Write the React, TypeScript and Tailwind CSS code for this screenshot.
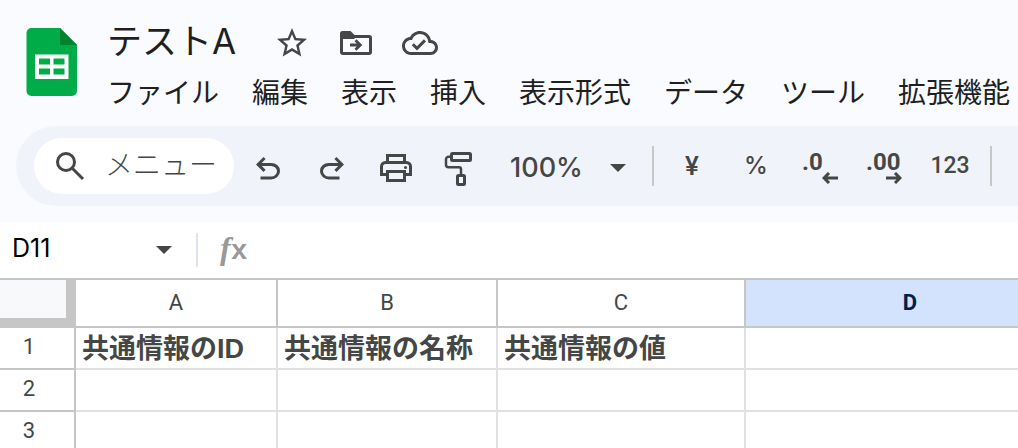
import React from 'react';

const menus = ['ファイル', '編集', '表示', '挿入', '表示形式', 'データ', 'ツール', '拡張機能'];

const columns = [
  { name: 'A', selected: false },
  { name: 'B', selected: false },
  { name: 'C', selected: false },
  { name: 'D', selected: true },
];

const rows = [
  ['共通情報のID', '共通情報の名称', '共通情報の値', ''],
  ['', '', '', ''],
  ['', '', '', ''],
];

const SheetsLogo = () => (
  <svg width="52" height="70" viewBox="0 0 52 70" aria-hidden="true">
    <path d="M5 1h29l17 17v46a5 5 0 0 1-5 5H5.500a5 5 0 0 1-5-5V6a5 5 0 0 1 5-5z" fill="#00ac47" />
    <path d="M34 1l17 17H34z" fill="#00832d" />
    <path
      d="M9 27.500h33.500v24.500H9zM13 31.500v6h11v-6zM27.500 31.500v6h11v-6zM13 41.500v6h11v-6zM27.500 41.500v6h11v-6z"
      fill="#fff"
      fillRule="evenodd"
    />
  </svg>
);

const StarIcon = () => (
  <svg width="36" height="36" viewBox="0 0 24 24" fill="currentColor" aria-hidden="true">
    <path d="M22 9.240l-7.190-.62L12 2 9.190 8.630 2 9.240l5.460 4.730L5.820 21 12 17.270 18.180 21l-1.630-7.030L22 9.240zM12 15.400l-3.760 2.270 1-4.280-3.320-2.880 4.380-.38L12 6.100l1.710 4.040 4.380.38-3.320 2.880 1 4.280L12 15.400z" />
  </svg>
);

const MoveIcon = () => (
  <svg width="36" height="36" viewBox="0 0 36 36" aria-hidden="true">
    <path d="M2 14V8.500A2.500 2.500 0 0 1 4.500 6h8l4 4v4z" fill="currentColor" />
    <rect x="3.500" y="11.500" width="29" height="17" rx="1.500" fill="none" stroke="currentColor" strokeWidth="3" />
    <path d="M12 20h10M17.500 15.200l4.800 4.800-4.800 4.800" fill="none" stroke="currentColor" strokeWidth="2.800" />
  </svg>
);

const CloudDoneIcon = () => (
  <svg width="36" height="36" viewBox="0 0 24 24" fill="currentColor" aria-hidden="true">
    <path d="M19.350 10.040C18.670 6.590 15.640 4 12 4 9.110 4 6.600 5.640 5.350 8.040 2.340 8.360 0 10.910 0 14c0 3.310 2.690 6 6 6h13c2.760 0 5-2.240 5-5 0-2.640-2.050-4.780-4.650-4.960zM19 18H6c-2.210 0-4-1.790-4-4 0-2.050 1.530-3.760 3.560-3.970l1.070-.11.5-.95C8.080 7.140 9.940 6 12 6c2.620 0 4.880 1.860 5.390 4.430l.3 1.500 1.530.11c1.560.1 2.780 1.410 2.780 2.960 0 1.650-1.350 3-3 3zm-9-3.820l-2.090-2.090L6.500 13.500 10 17l6.010-6.010-1.410-1.410z" />
  </svg>
);

const SearchIcon = () => (
  <svg width="36" height="36" viewBox="0 0 36 36" fill="none" stroke="currentColor" strokeWidth="3" aria-hidden="true">
    <circle cx="14" cy="14" r="8.500" />
    <path d="M20 20l11 11" />
  </svg>
);

const UndoIcon = ({ className }: { className?: string }) => (
  <svg width="36" height="36" viewBox="0 -985 960 960" fill="currentColor" className={className} aria-hidden="true">
    <path d="M280-200v-80h284q63 0 109.500-40T720-420q0-60-46.500-100T564-560H312l104 104-56 56-200-200 200-200 56 56-104 104h252q97 0 169.500 63T800-420q0 94-72.500 157T564-200H280Z" />
  </svg>
);

const PrintIcon = () => (
  <svg width="36" height="36" viewBox="0 0 36 36" fill="none" stroke="currentColor" strokeWidth="3" aria-hidden="true">
    <path d="M9.500 12V5.500h17V12" />
    <path d="M9.500 24.500h-6v-8a4 4 0 0 1 4-4h21a4 4 0 0 1 4 4v8h-6" />
    <rect x="9.500" y="21.500" width="17" height="9" />
    <circle cx="27.500" cy="17.500" r="1.500" fill="currentColor" stroke="none" />
  </svg>
);

const PaintIcon = () => (
  <svg width="36" height="36" viewBox="0 0 36 36" fill="none" stroke="currentColor" aria-hidden="true">
    <rect x="9.500" y="3.500" width="19" height="7" rx="1" strokeWidth="3" />
    <path d="M8.500 6.800H6.500a2.500 2.500 0 0 0-2.500 2.500v5.500A2.500 2.500 0 0 0 6.500 17.300H17a2 2 0 0 1 2 2V24" strokeWidth="2.500" />
    <rect x="15.500" y="25.500" width="7" height="9" rx="1" strokeWidth="3" />
  </svg>
);

const Caret = () => (
  <svg width="16" height="8" viewBox="0 0 16 8" fill="currentColor" aria-hidden="true">
    <path d="M0 0h16L8 8z" />
  </svg>
);

const Arrow = ({ className }: { className?: string }) => (
  <svg width="16" height="12" viewBox="0 0 16 12" fill="none" stroke="currentColor" strokeWidth="3" className={className} aria-hidden="true">
    <path d="M16 6H2M7 1L2 6l5 5" />
  </svg>
);

const toolButton = 'flex h-14 w-16 shrink-0 items-center justify-center';

const App: React.FC = () => {
  return (
    <div className="flex h-screen flex-col overflow-hidden bg-white font-['Roboto','Noto_Sans_CJK_JP',sans-serif] text-[#444746]">
      <header className="shrink-0 bg-[#f9fbff] pt-[25px] pb-4">
        <div className="flex">
          <a href="#" aria-label="スプレッドシート ホーム" className="mt-0.5 ml-[26px] shrink-0">
            <SheetsLogo />
          </a>
          <div className="ml-[29px] min-w-0">
            <div className="flex h-9 items-center gap-7">
              <h1 className="min-w-[139px] pb-1 font-['Inter','Noto_Sans_CJK_JP',sans-serif] text-[35px] leading-9 whitespace-nowrap text-[#1f1f1f]">
                テストA
              </h1>
              <button aria-label="スターを付ける"><StarIcon /></button>
              <button aria-label="移動"><MoveIcon /></button>
              <button aria-label="保存済み"><CloudDoneIcon /></button>
            </div>
            <nav className="mt-3.5 flex h-[38px] items-center gap-[33px] text-[28px] text-[#1f1f1f]">
              {menus.map(menu => (
                <button key={menu} className="shrink-0 whitespace-nowrap">{menu}</button>
              ))}
            </nav>
          </div>
        </div>

        {/* Toolbar */}
        <div className="mt-[13px] ml-4 flex h-20 items-center overflow-hidden rounded-l-full bg-[#f0f3fa] pl-[18px]">
          <label className="mr-0.5 flex h-14 w-[200px] shrink-0 items-center rounded-full bg-white pl-[18px]">
            <SearchIcon />
            <input
              type="text"
              aria-label="メニュー"
              placeholder="メニュー"
              className="ml-[17px] w-[120px] bg-transparent text-[28px] font-light outline-none placeholder:text-[#444746]"
            />
          </label>
          <button className={`${toolButton} pt-1`} aria-label="元に戻す"><UndoIcon /></button>
          <button className={`${toolButton} pt-1`} aria-label="やり直し"><UndoIcon className="-scale-x-100" /></button>
          <button className={`${toolButton} pt-1`} aria-label="印刷"><PrintIcon /></button>
          <button className={`${toolButton} pt-1`} aria-label="書式を貼り付け"><PaintIcon /></button>
          <button className="flex h-14 w-40 shrink-0 items-center justify-between pt-1 pr-[26px] pl-[18px] font-['Inter',sans-serif] text-[27px] font-medium">
            100%
            <Caret />
          </button>
          <div className="mr-1.5 h-10 w-0.5 shrink-0 bg-[#c7c7c7]" />
          <button className={`${toolButton} text-[26px] font-medium`}>¥</button>
          <button className={`${toolButton} font-['Inter',sans-serif] text-2xl font-medium`}>%</button>
          <button className={`${toolButton} pt-1`} aria-label="小数点以下の桁数を減らす">
            <span className="flex w-9 flex-col text-left">
              <span className="text-2xl leading-5 font-bold">.0</span>
              <Arrow className="self-end" />
            </span>
          </button>
          <button className={`${toolButton} pt-1`} aria-label="小数点以下の桁数を増やす">
            <span className="flex w-9 flex-col text-left">
              <span className="text-2xl leading-5 font-bold">.00</span>
              <Arrow className="-scale-x-100 self-end" />
            </span>
          </button>
          <button className="flex h-14 w-[68px] shrink-0 items-center justify-center text-[23px] font-medium">123</button>
          <div className="ml-1.5 h-10 w-0.5 shrink-0 bg-[#c7c7c7]" />
        </div>
      </header>

      {/* Name box and formula bar */}
      <div className="flex h-14 shrink-0 items-center">
        <button className="flex w-[196px] shrink-0 items-center justify-between pr-6 pl-3 font-['Inter',sans-serif] text-[25px] text-black">
          <span className="pb-0.5">D11</span>
          <span className="text-[#444746]"><Caret /></span>
        </button>
        <div className="h-[34px] w-0.5 bg-[#dde3ee]" />
        <label htmlFor="formula" className="ml-[22px] flex items-baseline text-[#999]">
          <span className="font-['Liberation_Serif',serif] text-[32px] leading-8 font-bold italic">f</span>
          <span className="font-['Liberation_Mono',monospace] text-[28px] leading-8 font-bold">x</span>
        </label>
        <input id="formula" type="text" className="ml-4 min-w-0 flex-1 text-[26px] outline-none" />
      </div>

      <div className="min-h-0 flex-1 overflow-hidden border-t-2 border-[#c4c7c5]">
        <table className="w-[1076px] table-fixed border-separate border-spacing-0">
          <colgroup>
            <col className="w-[76px]" />
            <col className="w-[202px]" />
            <col className="w-[220px]" />
            <col className="w-[248px]" />
            <col className="w-[330px]" />
          </colgroup>
          <thead>
            <tr className="h-12">
              <th className="border-r-[10px] border-b-[10px] border-[#c6c6c6] bg-[#f8f9fb] p-0" aria-label="すべて選択" />
              {columns.map(col => (
                <th
                  key={col.name}
                  className={`border-r-2 border-b-2 border-[#c4c7c5] p-0 pb-0.5 text-[22px] ${
                    col.selected ? 'bg-[#d3e3fd] font-bold text-[#041e49]' : 'font-normal'
                  }`}
                >
                  {col.name}
                </th>
              ))}
            </tr>
          </thead>
          <tbody>
            {rows.map((cells, i) => (
              <tr key={i} className="h-[42px]">
                <th className="border-r-2 border-b-2 border-[#c4c7c5] p-0 pr-4 pb-0.5 text-[22px] leading-9 font-normal">{i + 1}</th>
                {cells.map((cell, j) => (
                  <td
                    key={j}
                    className="border-r-2 border-b-2 border-[#e1e1e1] p-0 pt-0.5 pl-1.5 font-['Liberation_Sans','Noto_Sans_CJK_JP',sans-serif] text-[27px] leading-9 font-bold whitespace-nowrap"
                  >
                    {cell}
                  </td>
                ))}
              </tr>
            ))}
          </tbody>
        </table>
      </div>
    </div>
  );
};

export default App;
